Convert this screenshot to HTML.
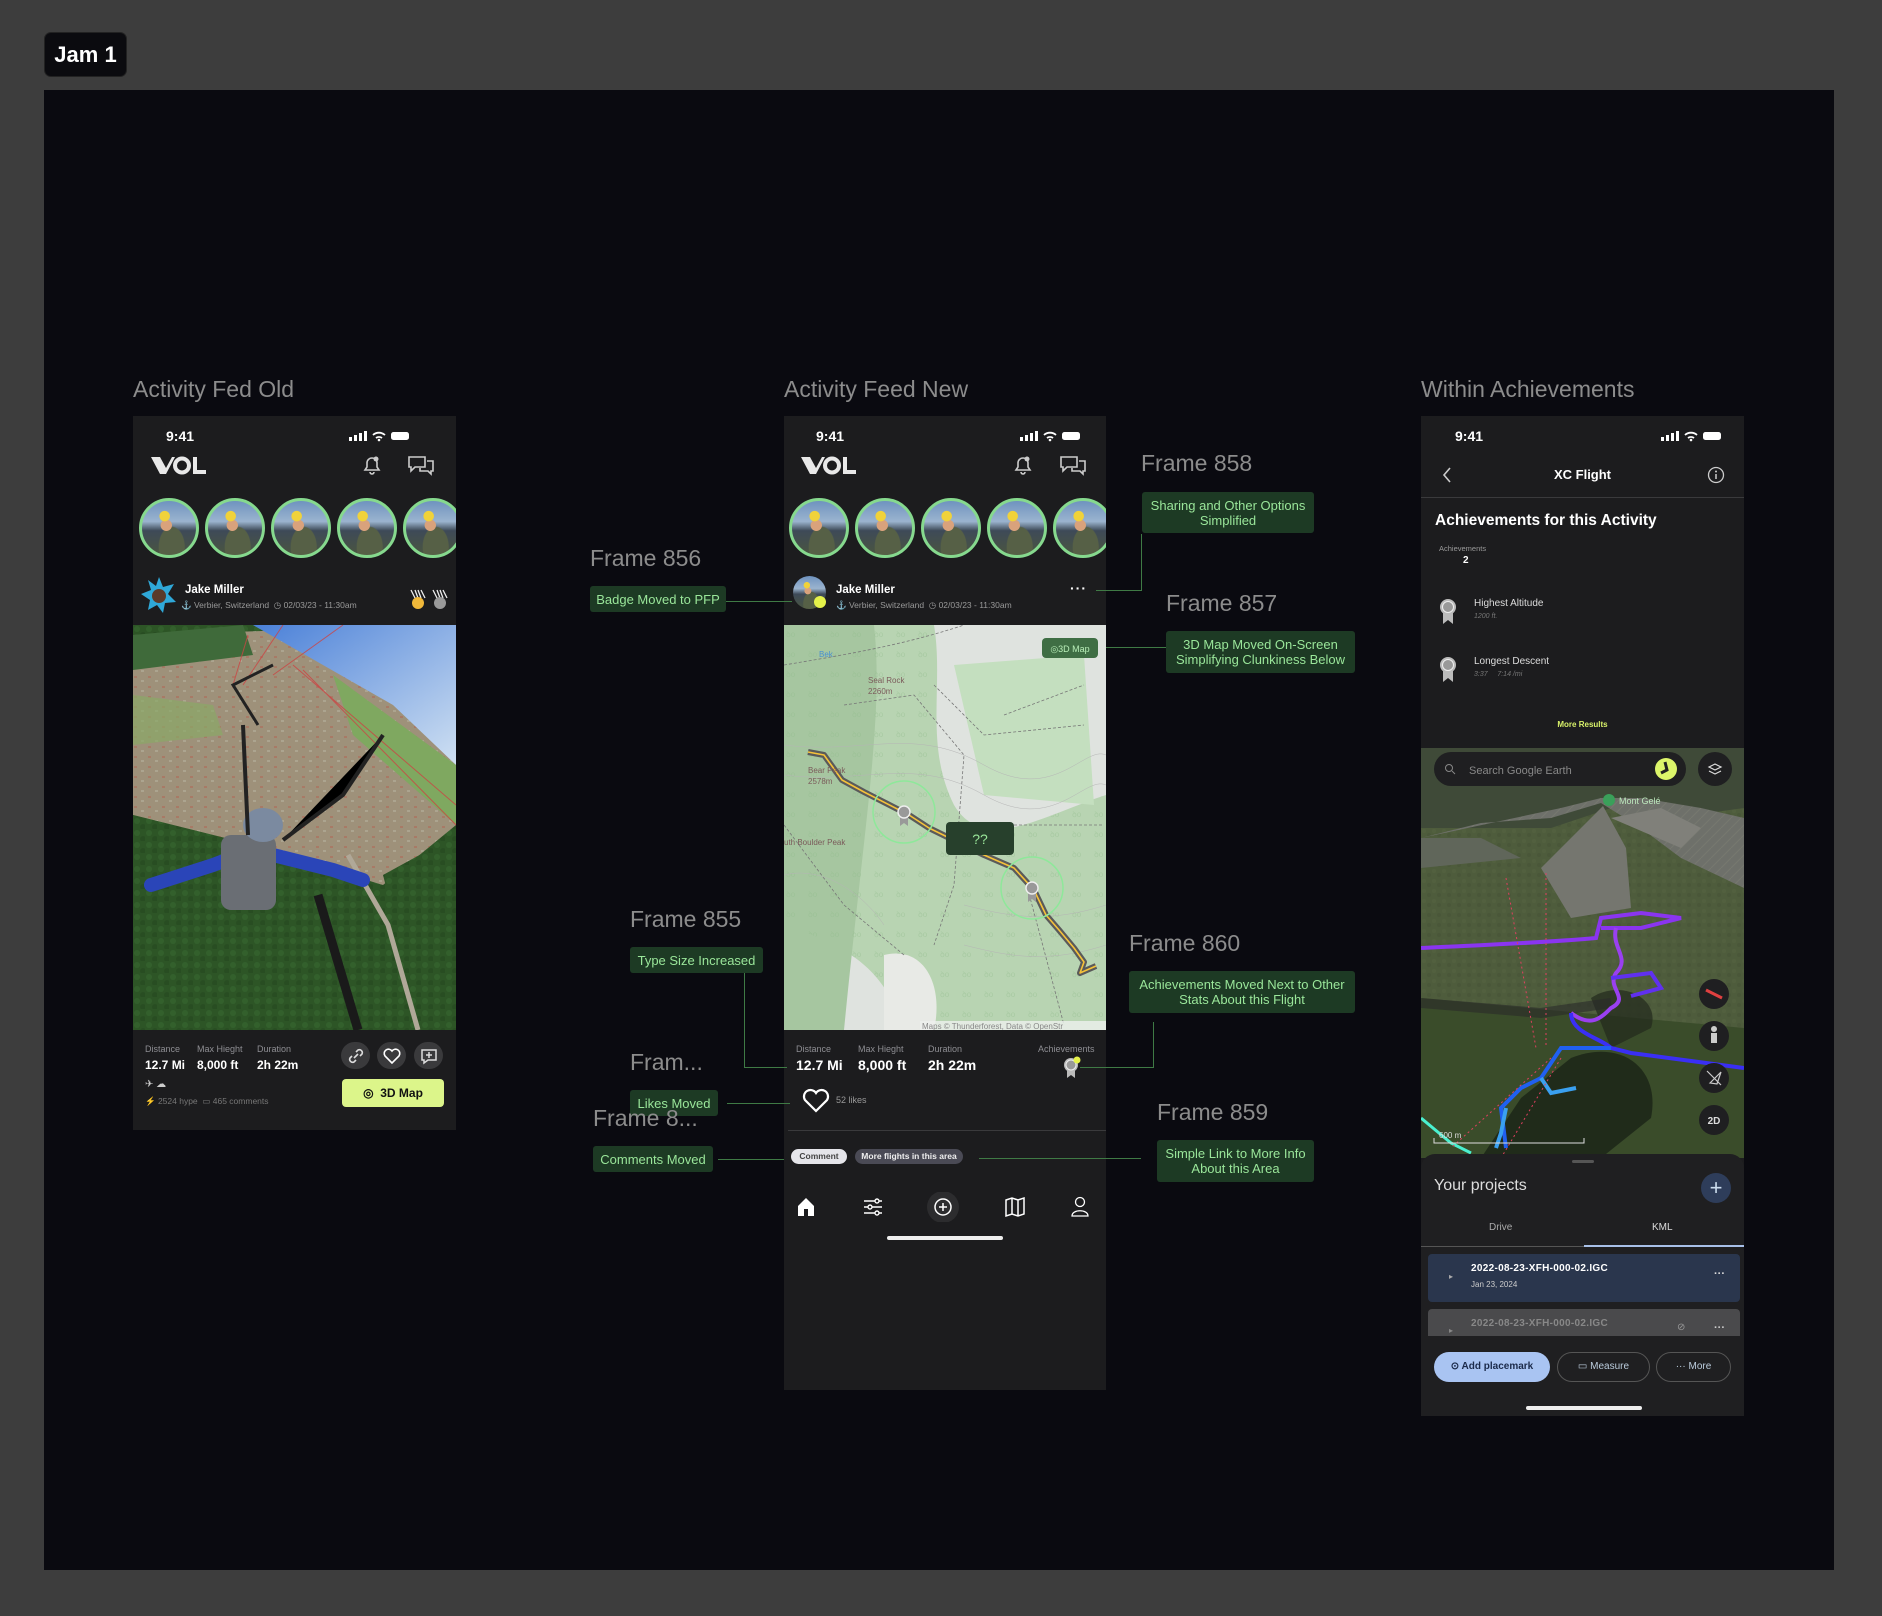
<!DOCTYPE html>
<html><head><meta charset="utf-8">
<style>
*{margin:0;padding:0;box-sizing:border-box}
body{width:1882px;height:1616px;background:#3d3d3d;position:relative;overflow:hidden;font-family:"Liberation Sans",sans-serif}
.a{position:absolute}
.canvas{left:44px;top:90px;width:1790px;height:1480px;background:#0a0a10}
.jam{left:44px;top:32px;width:83px;height:45px;background:#0b0b0f;border:1px solid #222;border-radius:7px;color:#fff;font-size:22px;font-weight:bold;line-height:43px;text-align:center}
.title{color:#8c8c8c;font-size:23px}
.phone{background:#1c1c1e;overflow:hidden}
.st{font-size:14px;color:#fff;font-weight:bold}
.lbl{background:#1d3a24;color:#9ae69a;font-size:13px;text-align:center;border-radius:3px;line-height:15px;display:flex;align-items:center;justify-content:center}
.ln{background:#3f7a45}
.story{width:60px;height:60px;border-radius:50%;border:3px solid #86d98e;background:radial-gradient(circle at 42% 28%,#f0d23a 0 10%,transparent 11%),radial-gradient(circle at 45% 45%,#d9a27c 0 13%,transparent 14%),radial-gradient(ellipse at 55% 85%,#566046 0 30%,transparent 32%),linear-gradient(180deg,#6f93bf 0%,#9bb4cf 38%,#3e4a58 55%,#4a5540 100%)}
.sl{font-size:9px;color:#8e8e93}
.sv{font-size:13px;color:#fff;font-weight:bold}
</style></head><body>
<div class="a canvas"></div>
<div class="a jam">Jam 1</div>

<div class="a title" style="left:133px;top:376px">Activity Fed Old</div>
<div class="a title" style="left:784px;top:376px">Activity Feed New</div>
<div class="a title" style="left:1421px;top:376px">Within Achievements</div>

<svg width="0" height="0" style="position:absolute"><defs>
<pattern id="town" width="14" height="10" patternUnits="userSpaceOnUse"><rect width="14" height="10" fill="#9e917a"/><rect x="1" y="1" width="3" height="2" fill="#a87a66"/><rect x="8" y="5" width="3" height="2" fill="#aca48f"/></pattern>
<pattern id="forest" width="12" height="12" patternUnits="userSpaceOnUse"><rect width="12" height="12" fill="#2d5526"/><circle cx="4" cy="4" r="3" fill="#33602c"/><circle cx="10" cy="10" r="3" fill="#284d22"/></pattern>
<pattern id="trees" width="22" height="20" patternUnits="userSpaceOnUse"><text x="2" y="12" font-size="8" fill="#8fbb8a" font-family="Liberation Sans">ꝺo</text></pattern>
<pattern id="rock" width="10" height="10" patternUnits="userSpaceOnUse"><rect width="10" height="10" fill="#6e706a"/><path d="M0 10L10 0" stroke="#76786f" stroke-width="1"/></pattern>
<pattern id="grass" width="10" height="10" patternUnits="userSpaceOnUse"><rect width="10" height="10" fill="#4e5c3c"/><circle cx="3" cy="3" r="2" fill="#52603f"/><circle cx="8" cy="7" r="2" fill="#4a5739"/></pattern>
</defs></svg>

<!-- PHONE 1 -->
<div class="a phone" style="left:133px;top:416px;width:323px;height:714px">
 <div class="a st" style="left:33px;top:12px">9:41</div>
 <svg class="a" style="left:216px;top:14px" width="62" height="12"><rect x="0" y="7" width="3" height="4" fill="#fff"/><rect x="5" y="5" width="3" height="6" fill="#fff"/><rect x="10" y="3" width="3" height="8" fill="#fff"/><rect x="15" y="1" width="3" height="10" fill="#fff"/><path d="M24 5a9 9 0 0 1 12 0M27 8a5 5 0 0 1 6 0" stroke="#fff" stroke-width="1.8" fill="none"/><circle cx="30" cy="10" r="1.3" fill="#fff"/><rect x="42" y="2" width="18" height="8" rx="2.5" fill="#fff"/></svg>
 <svg class="a" style="left:18px;top:38px" width="56" height="22"><path d="M0 3H9L15 14L21 3H24L15 20H9Z" fill="#e8e8e8"/><circle cx="31" cy="11.5" r="7" stroke="#e8e8e8" stroke-width="4" fill="none"/><path d="M42 3H46V16H55V20H42Z" fill="#e8e8e8"/></svg>
 <svg class="a" style="left:228px;top:38px" width="22" height="22"><path d="M4 16h14l-2-3V9a5 5 0 0 0-10 0v4z M9 18a2 2 0 0 0 4 0" stroke="#ccc" stroke-width="1.6" fill="none"/><circle cx="15" cy="5" r="2.5" fill="#ccc"/></svg>
 <svg class="a" style="left:274px;top:38px" width="28" height="22"><path d="M2 3h16v10H8l-4 4v-4H2z M20 7h6v10h-2v3l-3-3h-8v-3" stroke="#ccc" stroke-width="1.6" fill="none"/></svg>
 <div class="a story" style="left:6px;top:82px"></div><div class="a story" style="left:72px;top:82px"></div><div class="a story" style="left:138px;top:82px"></div><div class="a story" style="left:204px;top:82px"></div><div class="a story" style="left:270px;top:82px"></div>
 <svg class="a" style="left:7px;top:160px" width="38" height="38"><polygon points="19,1 23,11 34,8 28,18 36,26 25,27 23,37 17,29 8,34 10,24 1,18 11,14 8,4 16,10" fill="#2fa8d8"/><circle cx="19" cy="20" r="7" fill="#5a3a2a"/></svg>
 <div class="a" style="left:52px;top:168px;color:#fff;font-size:11.5px;font-weight:bold">Jake Miller</div>
 <div class="a" style="left:48px;top:184px;color:#999;font-size:8.5px">⚓ Verbier, Switzerland &nbsp;◷ 02/03/23 - 11:30am</div>
 <svg class="a" style="left:275px;top:172px" width="20" height="22"><path d="M3 2L7 10M7 2L10 10M10 2L13 10M13 2L17 10" stroke="#eee" stroke-width="1.3"/><circle cx="10" cy="15" r="6" fill="#f0b83a"/></svg>
 <svg class="a" style="left:297px;top:172px" width="20" height="22"><path d="M3 2L7 10M7 2L10 10M10 2L13 10M13 2L17 10" stroke="#eee" stroke-width="1.3"/><circle cx="10" cy="15" r="6" fill="#999"/></svg>
 <svg class="a" style="left:0;top:209px" width="323" height="405" viewBox="0 0 323 405">
  <defs><linearGradient id="sky" x1="0" y1="0" x2="1" y2="1"><stop offset="0" stop-color="#4a80d8"/><stop offset="1" stop-color="#cfe0f2"/></linearGradient></defs>
  <rect width="323" height="405" fill="url(#forest)"/>
  <polygon points="0,10 323,0 323,200 250,260 120,220 0,190" fill="url(#town)"/>
  <polygon points="0,10 110,0 120,30 0,45" fill="#3f6a3a"/>
  <polygon points="120,0 323,0 323,140 260,80" fill="url(#sky)"/>
  <polygon points="200,50 323,140 323,200 220,110" fill="#7fa860"/>
  <polygon points="0,70 80,80 90,110 0,120" fill="#8aa866" opacity=".7"/>
  <polygon points="0,190 120,220 160,405 0,405" fill="url(#forest)"/>
  <polygon points="250,250 323,210 323,405 290,405" fill="url(#forest)"/>
  <path d="M215 230L255 300L285 405" stroke="#b0a898" stroke-width="5" fill="none"/>
  <path d="M100 60L115 10M110 60L150 0M140 50L210 0M160 40L323 180M170 45L323 200" stroke="#c44" stroke-width="1" opacity=".8"/>
  <path d="M125 100L100 60L140 40" stroke="#222" stroke-width="3" fill="none"/>
  <path d="M225 405L185 270" stroke="#1a1a1a" stroke-width="9"/>
  <path d="M18 260L80 240L120 225L200 245L230 255" stroke="#2a45b8" stroke-width="14" stroke-linecap="round" fill="none"/>
  <rect x="88" y="210" width="55" height="75" rx="10" fill="#6a6e74"/>
  <ellipse cx="130" cy="200" rx="20" ry="17" fill="#7b8aa0"/>
  <path d="M115 210L110 100M150 215L210 170L250 110" stroke="#222" stroke-width="4"/>
 </svg>
 <div class="a sl" style="left:12px;top:628px">Distance</div><div class="a sl" style="left:64px;top:628px">Max Hieght</div><div class="a sl" style="left:124px;top:628px">Duration</div>
 <div class="a sv" style="left:12px;top:642px;font-size:12px">12.7 Mi</div><div class="a sv" style="left:64px;top:642px;font-size:12px">8,000 ft</div><div class="a sv" style="left:124px;top:642px;font-size:12px">2h 22m</div>
 <div class="a" style="left:12px;top:663px;color:#ccc;font-size:10px">✈ ☁</div>
 <div class="a" style="left:12px;top:680px;color:#777;font-size:8.5px">⚡ 2524 hype &nbsp;▭ 465 comments</div>
 <div class="a" style="left:208px;top:626px;width:29px;height:27px;border-radius:14px;background:#3a3a3c"></div>
 <svg class="a" style="left:213px;top:630px" width="20" height="20"><path d="M8 12L12 8M6 10L4 12a3 3 0 0 0 4 4l2-2M14 10l2-2a3 3 0 0 0-4-4l-2 2" stroke="#ddd" stroke-width="1.6" fill="none"/></svg>
 <div class="a" style="left:244px;top:626px;width:29px;height:27px;border-radius:14px;background:#3a3a3c"></div>
 <svg class="a" style="left:249px;top:630px" width="20" height="20"><path d="M10 17L3 10a4 4 0 0 1 7-5a4 4 0 0 1 7 5z" stroke="#fff" stroke-width="1.6" fill="none"/></svg>
 <div class="a" style="left:281px;top:626px;width:29px;height:27px;border-radius:14px;background:#3a3a3c"></div>
 <svg class="a" style="left:286px;top:630px" width="20" height="20"><path d="M3 4H17V14H9L5 17V14H3Z M10 6V12M7 9H13" stroke="#ddd" stroke-width="1.5" fill="none"/></svg>
 <div class="a" style="left:209px;top:663px;width:102px;height:28px;border-radius:4px;background:#dcf58a;color:#111;font-size:12px;font-weight:bold;line-height:28px;text-align:center">◎ &nbsp;3D Map</div>
</div>

<!-- PHONE 2 -->
<div class="a phone" style="left:784px;top:416px;width:322px;height:974px">
 <div class="a st" style="left:32px;top:12px">9:41</div>
 <svg class="a" style="left:236px;top:14px" width="62" height="12"><rect x="0" y="7" width="3" height="4" fill="#fff"/><rect x="5" y="5" width="3" height="6" fill="#fff"/><rect x="10" y="3" width="3" height="8" fill="#fff"/><rect x="15" y="1" width="3" height="10" fill="#fff"/><path d="M24 5a9 9 0 0 1 12 0M27 8a5 5 0 0 1 6 0" stroke="#fff" stroke-width="1.8" fill="none"/><circle cx="30" cy="10" r="1.3" fill="#fff"/><rect x="42" y="2" width="18" height="8" rx="2.5" fill="#fff"/></svg>
 <svg class="a" style="left:17px;top:38px" width="56" height="22"><path d="M0 3H9L15 14L21 3H24L15 20H9Z" fill="#e8e8e8"/><circle cx="31" cy="11.5" r="7" stroke="#e8e8e8" stroke-width="4" fill="none"/><path d="M42 3H46V16H55V20H42Z" fill="#e8e8e8"/></svg>
 <svg class="a" style="left:228px;top:38px" width="22" height="22"><path d="M4 16h14l-2-3V9a5 5 0 0 0-10 0v4z M9 18a2 2 0 0 0 4 0" stroke="#ccc" stroke-width="1.6" fill="none"/><circle cx="15" cy="5" r="2.5" fill="#ccc"/></svg>
 <svg class="a" style="left:275px;top:38px" width="28" height="22"><path d="M2 3h16v10H8l-4 4v-4H2z M20 7h6v10h-2v3l-3-3h-8v-3" stroke="#ccc" stroke-width="1.6" fill="none"/></svg>
 <div class="a story" style="left:5px;top:82px"></div><div class="a story" style="left:71px;top:82px"></div><div class="a story" style="left:137px;top:82px"></div><div class="a story" style="left:203px;top:82px"></div><div class="a story" style="left:269px;top:82px"></div>
 <div class="a story" style="left:9px;top:160px;width:33px;height:33px;border:none"></div>
 <div class="a" style="left:30px;top:180px;width:12px;height:12px;background:#e5f24a;border-radius:50%"></div>
 <div class="a" style="left:52px;top:168px;color:#fff;font-size:11.5px;font-weight:bold">Jake Miller</div>
 <div class="a" style="left:52px;top:184px;color:#999;font-size:8.5px">⚓ Verbier, Switzerland &nbsp;◷ 02/03/23 - 11:30am</div>
 <div class="a" style="left:286px;top:164px;color:#fff;font-size:14px;font-weight:bold;letter-spacing:1px">···</div>
 <svg class="a" style="left:0;top:209px" width="322" height="405" viewBox="0 0 322 405">
  <rect width="322" height="405" fill="#dfe3df"/>
  <path d="M0 0H150C160 60 140 120 170 180C200 230 260 190 322 170V405H120C100 340 60 320 0 300Z" fill="#b8d4b2"/>
  <path d="M0 0H90C100 90 80 200 60 405H0Z" fill="#a6c6a0"/>
  <path d="M170 40L300 30L310 180L200 170Z" fill="#c4dfbf"/>
  <path d="M0 0H150C160 60 140 120 170 180C200 230 260 190 322 170V405H120C100 340 60 320 0 300Z" fill="url(#trees)" opacity=".4"/>
  <path d="M100 330C140 320 160 360 150 405H100Z" fill="#e8eae6"/>
  <g stroke="#777" stroke-width="0.8" stroke-dasharray="3 2" fill="none"><path d="M0 40C60 30 120 20 180 0"/><path d="M60 80L130 70L180 130L170 260L150 320"/><path d="M220 90L300 60M200 200L320 200M240 250L280 400M0 200L60 280L120 330M150 60L200 110L300 100"/></g>
  <g stroke="#b5b5b5" stroke-width="0.5" fill="none"><path d="M0 120C80 130 130 100 200 140S300 120 322 130"/><path d="M0 150C80 160 130 130 200 170S300 150 322 160"/><path d="M180 280C220 290 260 300 322 280"/><path d="M180 320C220 330 260 340 322 320"/><path d="M0 250C40 240 80 270 100 300"/></g>
  <path d="M24 127L40 130L58 155L80 167L125 190L145 203L200 230L230 243L250 265L262 290L275 305L290 323L300 337L296 348L312 341" stroke="#5a5a5a" stroke-width="6" fill="none" stroke-linejoin="round"/>
  <path d="M24 127L40 130L58 155L80 167L125 190L145 203L200 230L230 243L250 265L262 290L275 305L290 323L300 337L296 348L312 341" stroke="#f5c23a" stroke-width="1.6" fill="none" stroke-linejoin="round"/>
  <circle cx="120" cy="187" r="31" stroke="#8ee89a" stroke-width="1.5" fill="none"/>
  <circle cx="248" cy="263" r="31" stroke="#8ee89a" stroke-width="1.5" fill="none"/>
  <path d="M116 190V201L120 198L124 201V190M244 266V277L248 274L252 277V266" fill="#999"/>
  <circle cx="120" cy="187" r="6" fill="#999" stroke="#eee" stroke-width="1.5"/><circle cx="248" cy="263" r="6" fill="#999" stroke="#eee" stroke-width="1.5"/>
  <rect x="162" y="197" width="68" height="33" rx="4" fill="#27402c"/>
  <text x="196" y="219" fill="#9ae69a" font-size="14" text-anchor="middle" font-family="Liberation Sans">??</text>
  <text x="84" y="58" fill="#7a5a5a" font-size="8" font-family="Liberation Sans">Seal Rock</text><text x="84" y="69" fill="#7a5a5a" font-size="8" font-family="Liberation Sans">2260m</text>
  <text x="24" y="148" fill="#7a5a5a" font-size="8" font-family="Liberation Sans">Bear Peak</text><text x="24" y="159" fill="#7a5a5a" font-size="8" font-family="Liberation Sans">2578m</text>
  <text x="0" y="220" fill="#7a5a5a" font-size="8" font-family="Liberation Sans">uth Boulder Peak</text>
  <text x="35" y="32" fill="#4a90d0" font-size="8" font-family="Liberation Sans">Bek</text>
  <rect x="258" y="13" width="56" height="20" rx="4" fill="#3f6e44"/>
  <text x="286" y="27" fill="#b8eeb8" font-size="9" text-anchor="middle" font-family="Liberation Sans">◎3D Map</text>
  <rect x="136" y="396" width="186" height="9" fill="#eef0ee" opacity=".8"/>
  <text x="138" y="404" fill="#888" font-size="8" font-family="Liberation Sans">Maps © Thunderforest, Data © OpenStr</text>
 </svg>
 <div class="a sl" style="left:12px;top:628px">Distance</div><div class="a sl" style="left:74px;top:628px">Max Hieght</div><div class="a sl" style="left:144px;top:628px">Duration</div><div class="a sl" style="left:254px;top:628px">Achievements</div>
 <div class="a sv" style="left:12px;top:641px;font-size:14px">12.7 Mi</div><div class="a sv" style="left:74px;top:641px;font-size:14px">8,000 ft</div><div class="a sv" style="left:144px;top:641px;font-size:14px">2h 22m</div>
 <svg class="a" style="left:278px;top:640px" width="20" height="24"><path d="M5 11V22L9 19L13 22V11" fill="#bbb"/><circle cx="9" cy="9" r="7" fill="#bbb"/><circle cx="9" cy="9" r="5" fill="#999" stroke="#eee" stroke-width="1"/><circle cx="15" cy="4" r="3.5" fill="#e5f24a"/></svg>
 <svg class="a" style="left:18px;top:672px" width="28" height="26"><path d="M14 23L3 12a6 6 0 0 1 11-7a6 6 0 0 1 11 7z" stroke="#fff" stroke-width="2.2" fill="none"/></svg>
 <div class="a" style="left:52px;top:679px;color:#999;font-size:9px">52 likes</div>
 <div class="a" style="left:4px;top:714px;width:318px;height:1px;background:#3a3a3c"></div>
 <div class="a" style="left:7px;top:733px;width:56px;height:15px;border-radius:8px;background:#e5e5ea;color:#444;font-size:8.5px;font-weight:bold;text-align:center;line-height:15px">Comment</div>
 <div class="a" style="left:71px;top:733px;width:108px;height:15px;border-radius:8px;background:#4a4a55;color:#eee;font-size:8.5px;font-weight:bold;text-align:center;line-height:15px">More flights in this area</div>
 <svg class="a" style="left:10px;top:776px" width="300" height="30">
  <path d="M4 14L12 6L20 14V24H4Z" fill="#fff"/><rect x="10" y="17" width="4" height="7" fill="#1c1c1e"/>
  <g stroke="#fff" stroke-width="1.4"><path d="M70 9H88M70 15H88M70 21H88"/><circle cx="83" cy="9" r="2" fill="#1c1c1e"/><circle cx="76" cy="15" r="2" fill="#1c1c1e"/><circle cx="83" cy="21" r="2" fill="#1c1c1e"/></g>
  <circle cx="149" cy="15" r="16" fill="#2c2c2e"/><circle cx="149" cy="15" r="8" stroke="#fff" stroke-width="1.5" fill="none"/><path d="M149 11V19M145 15H153" stroke="#fff" stroke-width="1.5"/>
  <path d="M212 8L218 6L224 8L230 6V22L224 24L218 22L212 24Z M218 6V22M224 8V24" stroke="#fff" stroke-width="1.5" fill="none"/>
  <circle cx="286" cy="10" r="4.5" stroke="#fff" stroke-width="1.3" fill="none"/><path d="M278 24C278 17 294 17 294 24Z" stroke="#fff" stroke-width="1.3" fill="none"/>
 </svg>
 <div class="a" style="left:103px;top:820px;width:116px;height:4px;border-radius:2px;background:#eee"></div>
</div>

<!-- PHONE 3 -->
<div class="a phone" style="left:1421px;top:416px;width:323px;height:1000px">
 <div class="a st" style="left:34px;top:12px">9:41</div>
 <svg class="a" style="left:240px;top:14px" width="62" height="12"><rect x="0" y="7" width="3" height="4" fill="#fff"/><rect x="5" y="5" width="3" height="6" fill="#fff"/><rect x="10" y="3" width="3" height="8" fill="#fff"/><rect x="15" y="1" width="3" height="10" fill="#fff"/><path d="M24 5a9 9 0 0 1 12 0M27 8a5 5 0 0 1 6 0" stroke="#fff" stroke-width="1.8" fill="none"/><circle cx="30" cy="10" r="1.3" fill="#fff"/><rect x="42" y="2" width="18" height="8" rx="2.5" fill="#fff"/></svg>
 <svg class="a" style="left:20px;top:50px" width="12" height="18"><path d="M9 2L3 9L9 16" stroke="#ccc" stroke-width="1.6" fill="none"/></svg>
 <div class="a" style="left:0;top:51px;width:323px;text-align:center;color:#fff;font-size:13px;font-weight:bold">XC Flight</div>
 <svg class="a" style="left:286px;top:50px" width="18" height="18"><circle cx="9" cy="9" r="7.5" stroke="#ccc" stroke-width="1.3" fill="none"/><path d="M9 8V13" stroke="#ccc" stroke-width="1.5"/><circle cx="9" cy="5.5" r="1" fill="#ccc"/></svg>
 <div class="a" style="left:0;top:81px;width:323px;height:1px;background:#3a3a3c"></div>
 <div class="a" style="left:14px;top:96px;color:#fff;font-size:15.5px;font-weight:bold">Achievements for this Activity</div>
 <div class="a" style="left:18px;top:128px;color:#999;font-size:7.5px">Achievements</div>
 <div class="a" style="left:42px;top:139px;color:#fff;font-size:10px;font-weight:bold">2</div>
 <svg class="a" style="left:17px;top:182px" width="20" height="28"><path d="M5 14V26L10 22L15 26V14" fill="#bbb"/><circle cx="10" cy="9" r="8" fill="#bbb"/><circle cx="10" cy="9" r="5.5" fill="#999" stroke="#eee" stroke-width="1"/></svg>
 <div class="a" style="left:53px;top:182px;color:#ddd;font-size:10px">Highest Altitude</div>
 <div class="a" style="left:53px;top:197px;color:#777;font-size:7px;font-style:italic">1200 ft.</div>
 <svg class="a" style="left:17px;top:240px" width="20" height="28"><path d="M5 14V26L10 22L15 26V14" fill="#bbb"/><circle cx="10" cy="9" r="8" fill="#bbb"/><circle cx="10" cy="9" r="5.5" fill="#999" stroke="#eee" stroke-width="1"/></svg>
 <div class="a" style="left:53px;top:240px;color:#ddd;font-size:10px">Longest Descent</div>
 <div class="a" style="left:53px;top:255px;color:#777;font-size:7px;font-style:italic">3:37 &nbsp;&nbsp;&nbsp; 7:14 /mi</div>
 <div class="a" style="left:0;top:304px;width:323px;text-align:center;color:#d9f26a;font-size:8px;font-weight:bold">More Results</div>
 <svg class="a" style="left:0;top:332px" width="323" height="410" viewBox="0 0 323 410">
  <rect width="323" height="410" fill="url(#grass)"/>
  <path d="M0 0H323V60L250 70L190 60L130 80L0 80Z" fill="#3f4a38"/>
  <path d="M0 90L60 75L130 70L180 55L220 80L260 110L323 140V70L280 60L220 50L180 50L140 60Z" fill="url(#rock)"/>
  <path d="M120 120L182 58L205 100L210 160L150 170Z" fill="#75766f"/>
  <path d="M190 70L240 60L280 80L260 100Z" fill="#80807a"/>
  <path d="M0 120L0 90L60 90L100 110Z" fill="#60665a"/>
  <path d="M0 250L323 280V410H0Z" fill="#3a4c2a"/>
  <path d="M150 310C200 290 240 320 230 370L180 410H60L100 350Z" fill="#1c2618" opacity=".85"/>
  <path d="M170 250C200 230 240 250 230 280L190 300Z" fill="#222a1c" opacity=".7"/>
  <path d="M0 255L120 265L190 255" stroke="#2a2a2a" stroke-width="10" opacity=".6" fill="none"/>
  <path d="M0 200C60 197 120 195 175 190L180 170L220 165L260 170L220 180L180 180" stroke="#8a35f0" stroke-width="4" fill="none"/>
  <path d="M195 180C190 200 210 210 195 225C185 240 210 250 190 260C180 270 170 280 150 265" stroke="#9a40f0" stroke-width="4" fill="none"/>
  <path d="M190 230L230 225L240 240L210 248" stroke="#6030f0" stroke-width="4" fill="none"/>
  <path d="M150 265C150 285 180 290 190 300L210 305L323 320" stroke="#3a2ff5" stroke-width="4" fill="none"/>
  <path d="M190 300L140 300L120 330L100 340L80 360L85 400" stroke="#2060f0" stroke-width="4" fill="none"/>
  <path d="M85 360L80 385L75 400M120 330L130 345L155 340" stroke="#3aa0f0" stroke-width="4" fill="none"/>
  <path d="M0 370L30 395L50 405" stroke="#4af0d0" stroke-width="3" fill="none"/>
  <g stroke="#e04060" stroke-width="1" stroke-dasharray="2 3" fill="none"><path d="M85 130L115 300M125 125L125 300M130 310L30 400M140 310L80 410"/></g>
  <rect x="13" y="4" width="252" height="34" rx="17" fill="#1f1f21"/>
  <text x="48" y="26" fill="#888" font-size="11" font-family="Liberation Sans">Search Google Earth</text>
  <circle cx="28" cy="20" r="3.5" stroke="#888" fill="none"/><path d="M31 23L34 26" stroke="#888"/>
  <circle cx="245" cy="21" r="11" fill="#dcf56a"/><path d="M244 14L246 22L240 25" stroke="#222" stroke-width="3" fill="none"/>
  <circle cx="294" cy="21" r="17" fill="#1f1f21"/><path d="M288 19L294 16L300 19L294 22Z M288 23L294 26L300 23" stroke="#ddd" stroke-width="1.2" fill="none"/>
  <circle cx="188" cy="52" r="6" fill="#3aa05a"/><text x="198" y="56" fill="#bde8bd" font-size="9" font-family="Liberation Sans">Mont Gelé</text>
  <circle cx="293" cy="246" r="15" fill="#1f1f21"/><path d="M285 242L301 250" stroke="#e04040" stroke-width="3"/>
  <circle cx="293" cy="288" r="15" fill="#1f1f21"/><circle cx="293" cy="281" r="3" fill="#ccc"/><rect x="290" y="285" width="6" height="10" fill="#ccc"/>
  <circle cx="293" cy="330" r="15" fill="#1f1f21"/><path d="M286 323L300 337M289 335L300 324L296 336Z" stroke="#ccc" stroke-width="1.2" fill="none"/>
  <circle cx="293" cy="372" r="15" fill="#1f1f21"/><text x="293" y="376" fill="#ddd" font-size="10" font-weight="bold" text-anchor="middle" font-family="Liberation Sans">2D</text>
  <path d="M13 390V395H163V390" stroke="#ddd" fill="none"/><text x="18" y="390" fill="#ddd" font-size="8" font-family="Liberation Sans">600 m</text>
 </svg>
 <div class="a" style="left:0;top:738px;width:323px;height:262px;background:#1f1f21;border-radius:14px 14px 0 0"></div>
 <div class="a" style="left:151px;top:744px;width:22px;height:3px;border-radius:2px;background:#555"></div>
 <div class="a" style="left:13px;top:761px;color:#ddd;font-size:16px">Your projects</div>
 <div class="a" style="left:280px;top:757px;width:30px;height:30px;border-radius:50%;background:#2e3d5a;color:#cde;font-size:22px;text-align:center;line-height:29px">+</div>
 <div class="a" style="left:68px;top:806px;color:#aaa;font-size:10px">Drive</div>
 <div class="a" style="left:231px;top:806px;color:#ddd;font-size:10px">KML</div>
 <div class="a" style="left:0;top:830px;width:323px;height:1px;background:#555"></div>
 <div class="a" style="left:163px;top:829px;width:160px;height:2px;background:#a8c0e8"></div>
 <div class="a" style="left:7px;top:838px;width:312px;height:48px;border-radius:4px;background:#2a364d"></div>
 <div class="a" style="left:28px;top:856px;color:#aaa;font-size:8px">▸</div>
 <div class="a" style="left:50px;top:847px;color:#fff;font-size:10px;font-weight:bold;letter-spacing:.3px">2022-08-23-XFH-000-02.IGC</div>
 <div class="a" style="left:50px;top:864px;color:#ccc;font-size:8px">Jan 23, 2024</div>
 <div class="a" style="left:293px;top:852px;color:#ddd;font-size:11px;font-weight:bold">···</div>
 <div class="a" style="left:7px;top:893px;width:312px;height:27px;border-radius:4px 4px 0 0;background:#4a4a4c"></div>
 <div class="a" style="left:28px;top:910px;color:#888;font-size:8px">▸</div>
 <div class="a" style="left:50px;top:902px;color:#888;font-size:10px;font-weight:bold;letter-spacing:.3px">2022-08-23-XFH-000-02.IGC</div>
 <div class="a" style="left:256px;top:906px;color:#999;font-size:10px">⊘</div>
 <div class="a" style="left:293px;top:906px;color:#ccc;font-size:11px;font-weight:bold">···</div>
 <div class="a" style="left:13px;top:936px;width:116px;height:30px;border-radius:15px;background:#a9c4f2;color:#1b2a4a;font-size:10px;font-weight:bold;line-height:30px;text-align:center">⊙ Add placemark</div>
 <div class="a" style="left:136px;top:936px;width:93px;height:30px;border-radius:15px;border:1px solid #555;color:#bcd;font-size:10px;line-height:28px;text-align:center">▭ Measure</div>
 <div class="a" style="left:235px;top:936px;width:75px;height:30px;border-radius:15px;border:1px solid #555;color:#bcd;font-size:10px;line-height:28px;text-align:center">··· More</div>
 <div class="a" style="left:105px;top:990px;width:116px;height:4px;border-radius:2px;background:#eee"></div>
</div>

<!-- annotations -->
<div class="a title" style="left:1141px;top:450px">Frame 858</div>
<div class="a lbl" style="left:1142px;top:492px;width:172px;height:41px">Sharing and Other Options<br>Simplified</div>
<div class="a ln" style="left:1141px;top:534px;width:1px;height:57px"></div><div class="a ln" style="left:1096px;top:590px;width:46px;height:1px"></div>

<div class="a title" style="left:590px;top:545px">Frame 856</div>
<div class="a lbl" style="left:590px;top:586px;width:136px;height:26px">Badge Moved to PFP</div>
<div class="a ln" style="left:726px;top:601px;width:66px;height:1px"></div>

<div class="a title" style="left:1166px;top:590px">Frame 857</div>
<div class="a lbl" style="left:1166px;top:631px;width:189px;height:42px">3D Map Moved On-Screen<br>Simplifying Clunkiness Below</div>
<div class="a ln" style="left:1106px;top:647px;width:60px;height:1px"></div>

<div class="a title" style="left:630px;top:906px">Frame 855</div>
<div class="a lbl" style="left:630px;top:947px;width:133px;height:26px">Type Size Increased</div>
<div class="a ln" style="left:744px;top:973px;width:1px;height:95px"></div><div class="a ln" style="left:744px;top:1067px;width:43px;height:1px"></div>

<div class="a title" style="left:1129px;top:930px">Frame 860</div>
<div class="a lbl" style="left:1129px;top:971px;width:226px;height:42px">Achievements Moved Next to Other<br>Stats About this Flight</div>
<div class="a ln" style="left:1153px;top:1022px;width:1px;height:46px"></div><div class="a ln" style="left:1080px;top:1067px;width:74px;height:1px"></div>

<div class="a title" style="left:630px;top:1049px">Fram...</div>
<div class="a lbl" style="left:630px;top:1090px;width:88px;height:26px">Likes Moved</div>
<div class="a ln" style="left:727px;top:1103px;width:63px;height:1px"></div>

<div class="a title" style="left:593px;top:1105px">Frame 8...</div>
<div class="a lbl" style="left:593px;top:1146px;width:120px;height:26px">Comments Moved</div>
<div class="a ln" style="left:718px;top:1159px;width:66px;height:1px"></div>

<div class="a title" style="left:1157px;top:1099px">Frame 859</div>
<div class="a lbl" style="left:1157px;top:1140px;width:157px;height:42px">Simple Link to More Info<br>About this Area</div>
<div class="a ln" style="left:979px;top:1158px;width:162px;height:1px"></div>
</body></html>
